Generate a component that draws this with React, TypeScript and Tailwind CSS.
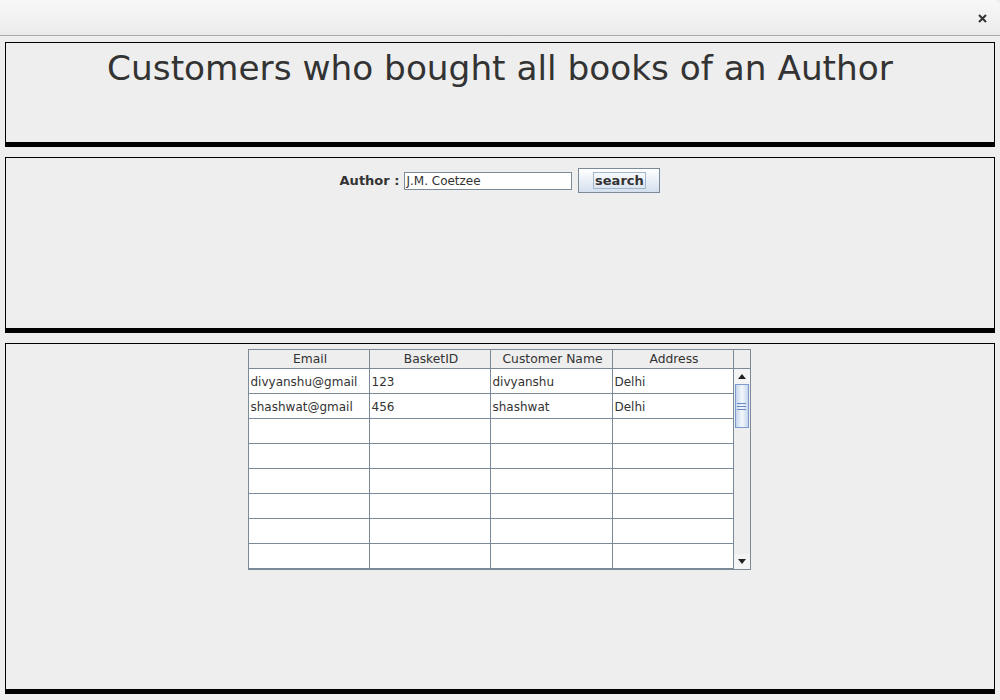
const font = { fontFamily: '"DejaVu Sans", Verdana, sans-serif' };

const columns = [
  { label: 'Email', width: 'w-[121px]' },
  { label: 'BasketID', width: 'w-[121px]' },
  { label: 'Customer Name', width: 'w-[122px]' },
  { label: 'Address', width: 'w-[121px]' },
];

const rows: string[][] = [
  ['divyanshu@gmail', '123', 'divyanshu', 'Delhi'],
  ['shashwat@gmail', '456', 'shashwat', 'Delhi'],
  ['', '', '', ''],
  ['', '', '', ''],
  ['', '', '', ''],
  ['', '', '', ''],
  ['', '', '', ''],
  ['', '', '', ''],
];

function TitleBar() {
  return (
    <div className="h-[36px] rounded-tr-[6px] border-b border-[#a9a9a9] bg-gradient-to-b from-[#f8f8f8] to-[#ebebeb] flex items-center justify-end pr-[13px]">
      <svg width="9" height="9" viewBox="0 0 9 9" className="mt-[1px]">
        <path d="M1 1 L8 8 M8 1 L1 8" stroke="#333" strokeWidth="2" />
      </svg>
    </div>
  );
}

function ScrollBar() {
  return (
    <div className="w-[16px] flex flex-col bg-[#eeeeee]">
      {/* header corner */}
      <div className="h-[19px] border-b border-[#7a8a99]" />
      {/* up arrow */}
      <div className="h-[15px] bg-[#f4f4f4] flex items-center justify-center">
        <svg width="8" height="5" viewBox="0 0 8 5">
          <path d="M0 5 L4 0 L8 5 Z" fill="#222" />
        </svg>
      </div>
      {/* thumb */}
      <div className="h-[44px] mx-[1px] border border-[#7e9ad0] bg-gradient-to-r from-[#c6d6ec] via-[#f4f8fd] to-[#c6d6ec] flex flex-col items-center justify-center gap-[2px]">
        <div className="w-[9px] h-px bg-[#6a88c2]" />
        <div className="w-[9px] h-px bg-[#6a88c2]" />
        <div className="w-[9px] h-px bg-[#6a88c2]" />
      </div>
      <div className="flex-1" />
      {/* down arrow */}
      <div className="h-[15px] bg-[#f4f4f4] flex items-center justify-center">
        <svg width="8" height="5" viewBox="0 0 8 5">
          <path d="M0 0 L8 0 L4 5 Z" fill="#222" />
        </svg>
      </div>
    </div>
  );
}

function CustomerTable() {
  return (
    <div className="flex border border-[#7a8a99] w-[503px] bg-white">
      <div className="w-[485px] flex flex-col">
        <div className="flex h-[19px] bg-[#eeeeee] border-b border-[#7a8a99]">
          {columns.map((c) => (
            <div
              key={c.label}
              className={`${c.width} border-r border-[#7a8a99] flex items-center justify-center pt-[1px] pl-[3px] text-[12.3px] text-[#333]`}
            >
              {c.label}
            </div>
          ))}
        </div>
        {rows.map((r, i) => (
          <div key={i} className="flex h-[25px] border-b border-[#7a8a99]">
            {r.map((v, j) => (
              <div
                key={j}
                className={`${columns[j].width} border-r border-[#7a8a99] flex items-center pl-[2px] pt-[1px] text-[12px] text-[#333]`}
              >
                {v}
              </div>
            ))}
          </div>
        ))}
      </div>
      <ScrollBar />
    </div>
  );
}

export default function App() {
  return (
    <div className="w-[1000px] h-[700px] bg-[#eeeeee] flex flex-col overflow-hidden" style={font}>
      <TitleBar />
      <div className="flex flex-col gap-[10px] px-[5px] pt-[6px]">
        {/* heading panel */}
        <div className="h-[105px] border border-black border-b-[5px] flex justify-center pt-[4px]">
          <h1 className="text-[34.3px] text-[#333] leading-[42px]">Customers who bought all books of an Author</h1>
        </div>

        {/* search panel */}
        <div className="h-[176px] border border-black border-b-[5px] flex justify-center items-start pt-[10px]">
          <div className="flex items-center">
            <span className="text-[13px] font-bold text-[#333] mr-[5px]">Author :</span>
            <div className="w-[168px] h-[18px] border border-[#7a8a99] bg-white flex items-center pl-[1px] text-[12px] text-[#333]">
              J.M. Coetzee
            </div>
            <button className="ml-[6px] w-[82px] h-[25px] border border-[#7a8a99] bg-gradient-to-b from-white to-[#d4e0ee] flex items-center justify-center">
              <span className="border border-[#a4b6c9] px-[1px] leading-[15px] text-[13px] font-bold text-[#333]">search</span>
            </button>
          </div>
        </div>

        {/* results panel */}
        <div className="h-[351px] border border-black border-b-[5px] flex justify-center pt-[5px]">
          <div className="ml-[-2px]">
            <CustomerTable />
          </div>
        </div>
      </div>
    </div>
  );
}
